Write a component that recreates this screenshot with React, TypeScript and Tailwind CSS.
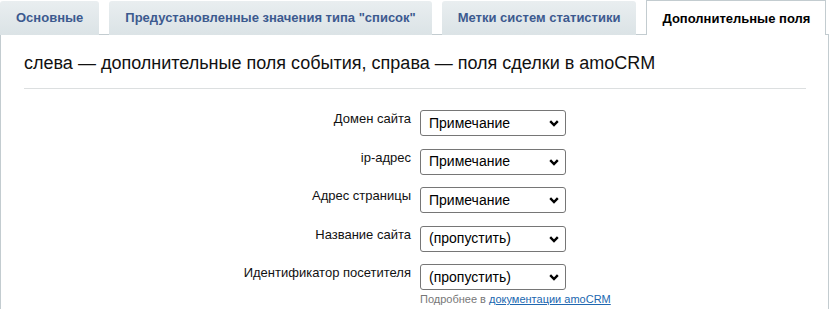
import React from 'react';

type Row = { label: string; value: string };

const rows: Row[] = [
  { label: 'Домен сайта', value: 'Примечание' },
  { label: 'ip-адрес', value: 'Примечание' },
  { label: 'Адрес страницы', value: 'Примечание' },
  { label: 'Название сайта', value: '(пропустить)' },
  { label: 'Идентификатор посетителя', value: '(пропустить)' },
];

const tabs = ['Основные', 'Предустановленные значения типа "список"', 'Метки систем статистики'];

const Chevron: React.FC = () => (
  <svg width="10" height="7" viewBox="0 0 10 7" className="absolute right-[7px] top-[10px] pointer-events-none">
    <path d="M1.2 1.2 L5 5 L8.8 1.2" fill="none" stroke="#000" strokeWidth="2.4" />
  </svg>
);

const FieldSelect: React.FC<{ value: string }> = ({ value }) => (
  <div className="relative w-[146px]">
    <select
      defaultValue={value}
      className="appearance-none w-full h-[26px] pl-[8px] pr-6 border border-[#767676] rounded-[3px] bg-white text-[14px] text-black outline-none"
    >
      <option>Примечание</option>
      <option>(пропустить)</option>
    </select>
    <Chevron />
  </div>
);

const App: React.FC = () => {
  return (
    <div className="w-[829px] h-[309px] bg-white overflow-hidden font-['Liberation_Sans',Arial,sans-serif]">
      {/* tabs */}
      <div className="flex items-end h-[35px] gap-[10px] relative z-10">
        {tabs.map((t) => (
          <div
            key={t}
            className="h-[34px] px-[16px] flex items-center rounded-t-[3px] bg-gradient-to-b from-[#e9eef0] to-[#dbe3e6] text-[13px] font-bold text-[#3c5a8f] whitespace-nowrap"
          >
            {t}
          </div>
        ))}
        <div className="h-[35px] px-[15px] pt-[1px] flex items-center bg-white border border-b-0 border-[#c3ccd0] text-[13px] font-bold text-black whitespace-nowrap">
          Дополнительные поля
        </div>
      </div>

      {/* panel */}
      <div className="-mt-px border border-[#c3ccd0] bg-white pl-[23px] pr-[22px] pt-[18px] h-[300px]">
        <div className="text-[18px] leading-[21px] text-[#111]">
          слева — дополнительные поля события, справа — поля сделки в amoCRM
        </div>
        <div className="mt-[14px] border-t border-[#dcdfe0]" />

        <div className="mt-[21px] flex flex-col gap-[12.5px]">
          {rows.map((r) => (
            <div key={r.label} className="flex items-start gap-[9px]">
              <div className="w-[387px] text-right text-[13px] leading-[15px] pt-[1px] text-[#111]">{r.label}</div>
              <FieldSelect value={r.value} />
            </div>
          ))}
        </div>
        <div className="ml-[396px] mt-[3px] text-[11px] leading-[13px] text-[#777]">
          Подробнее в{' '}
          <a href="#" className="text-[#2067b0] underline">
            документации amoCRM
          </a>
        </div>
      </div>
    </div>
  );
};

export default App;
